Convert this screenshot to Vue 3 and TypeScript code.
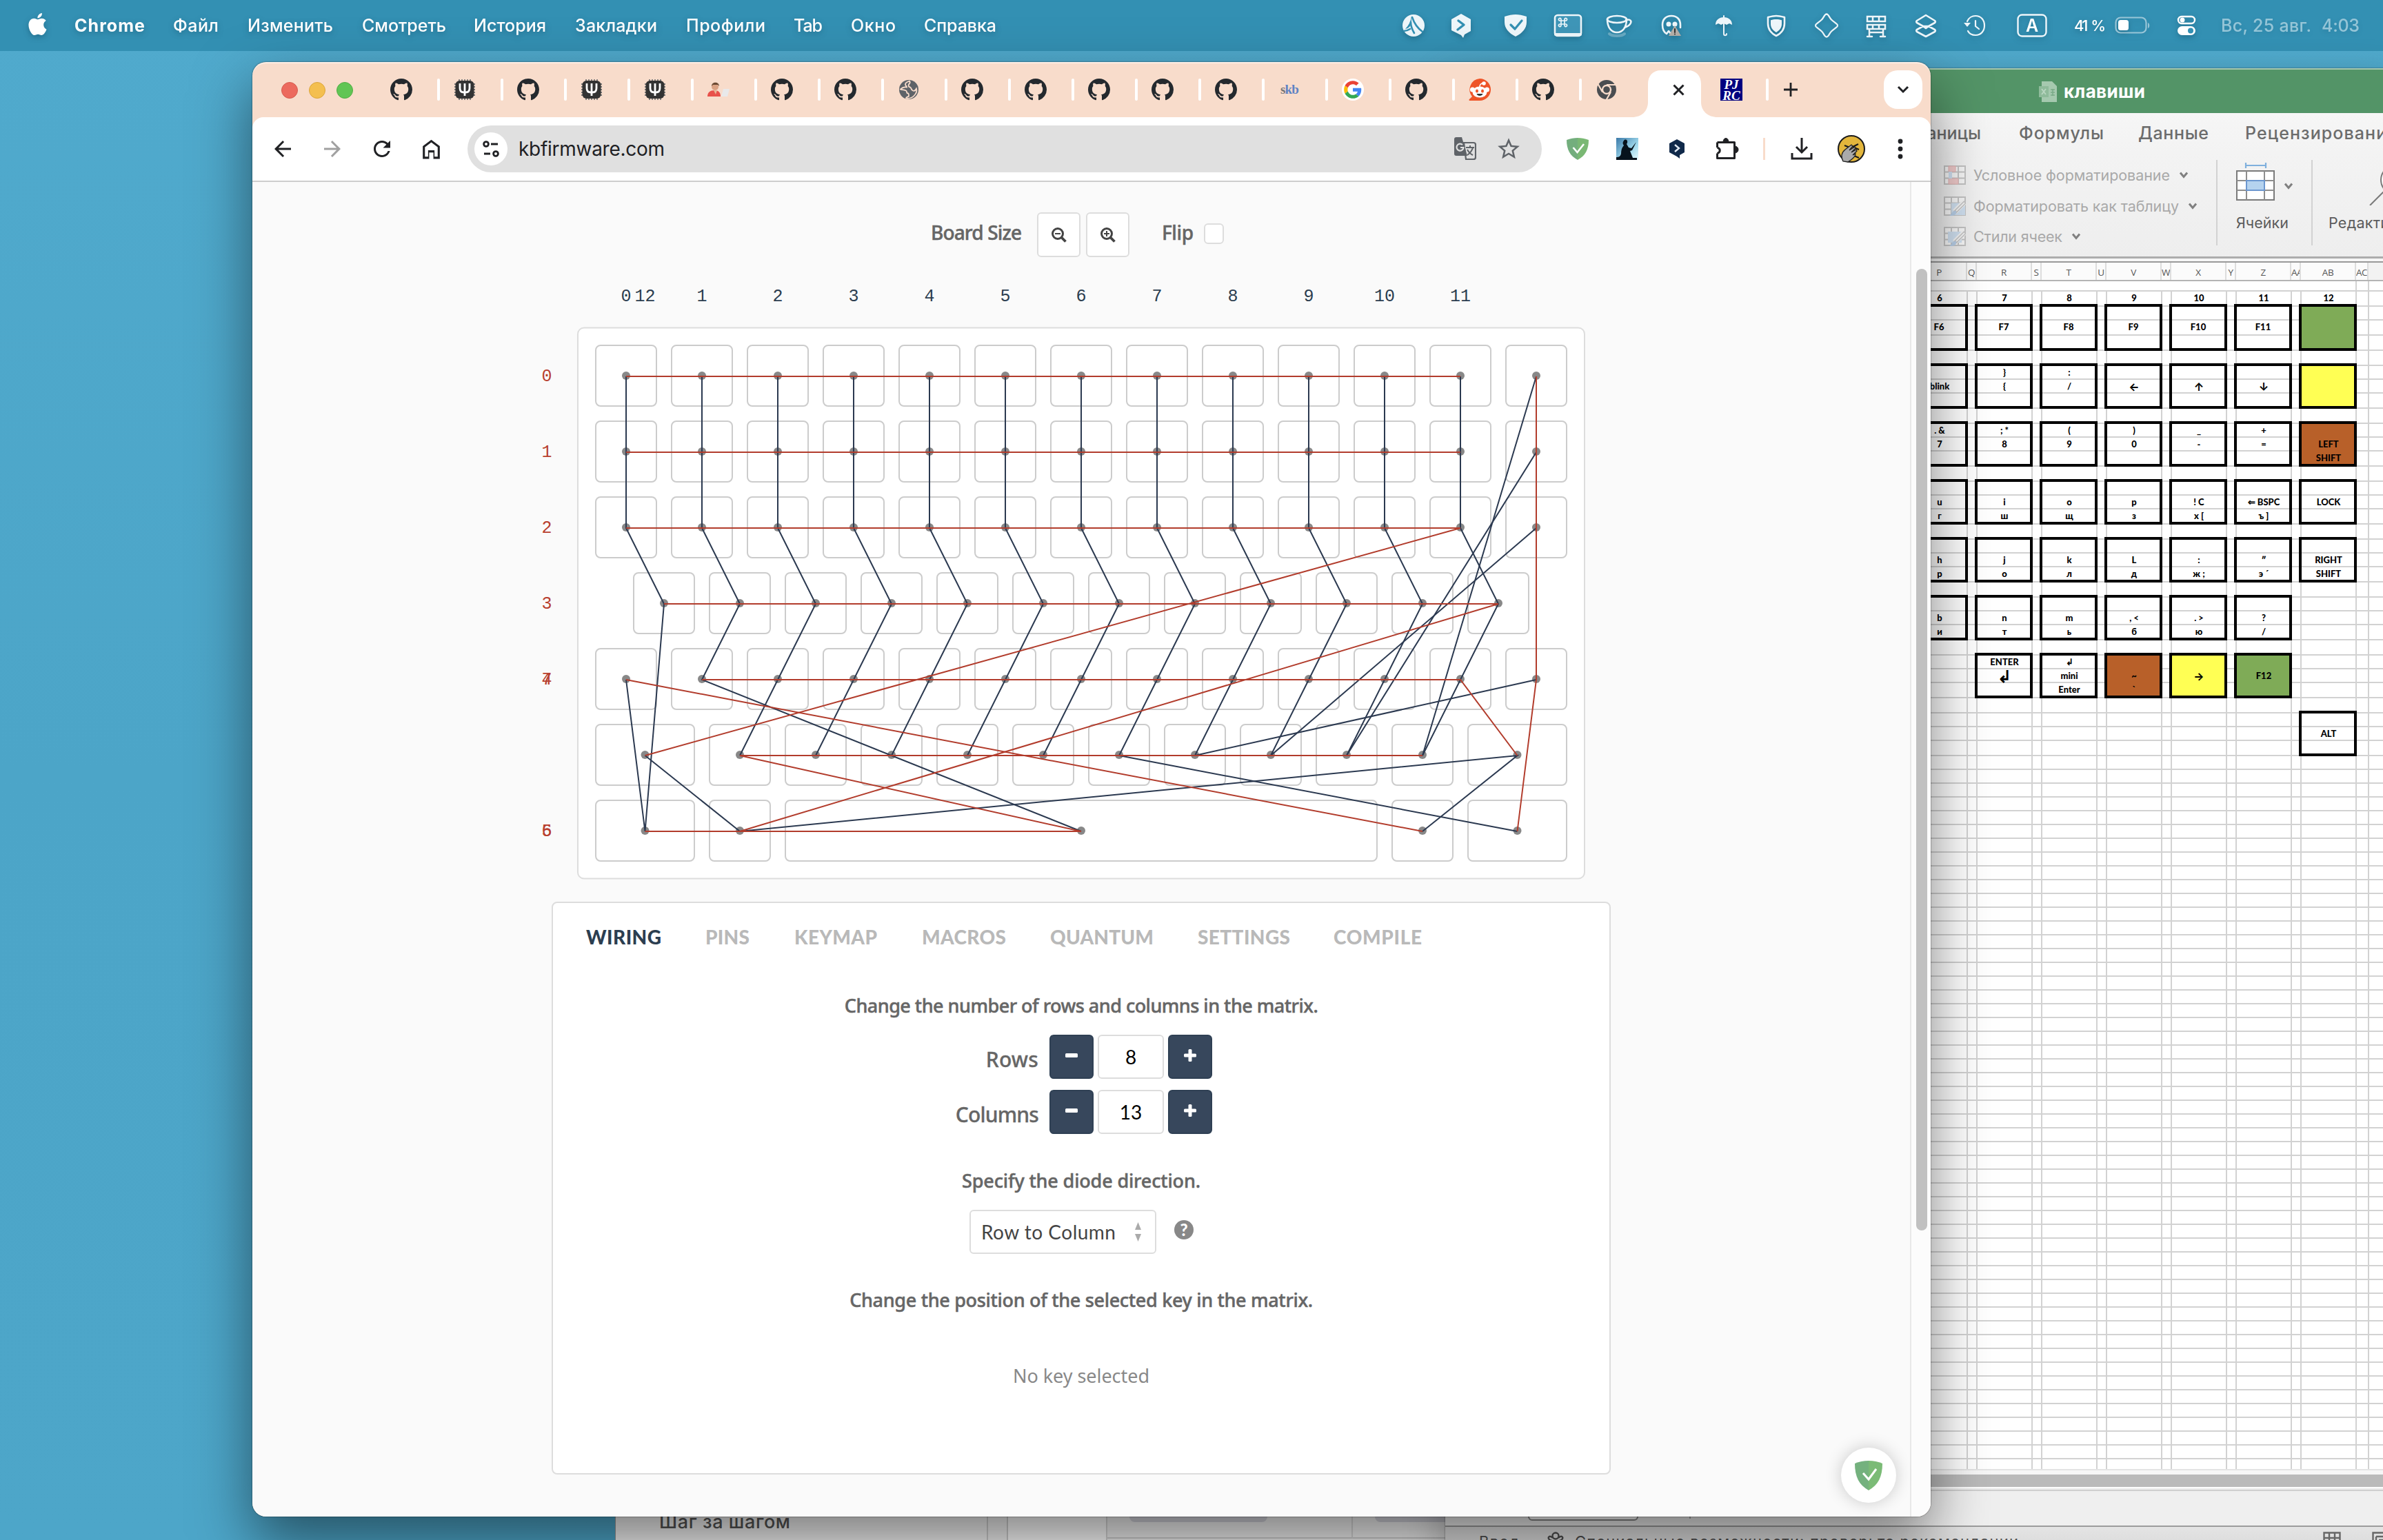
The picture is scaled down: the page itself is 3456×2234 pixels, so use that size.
<script setup lang="ts">
import type { Directive } from 'vue'

/** Tracks a label so that it takes exactly the given width in pixels. */
const vFit: Directive<HTMLElement, number> = {
  mounted(el, binding) {
    const text = el.textContent ?? ''
    const range = document.createRange()
    range.selectNodeContents(el)
    const natural = range.getBoundingClientRect().width
    const steps = Math.max(1, text.trim().length - 1)
    el.style.letterSpacing = `${((binding.value - natural) / steps).toFixed(3)}px`
  },
}

interface Label { text: string; width: number; gap: number }

const menus: Label[] = [
  { text: 'Файл', width: 66, gap: 41 },
  { text: 'Изменить', width: 124, gap: 42 },
  { text: 'Смотреть', width: 122, gap: 42 },
  { text: 'История', width: 105, gap: 40 },
  { text: 'Закладки', width: 119, gap: 42 },
  { text: 'Профили', width: 115, gap: 42 },
  { text: 'Tab', width: 42, gap: 41 },
  { text: 'Окно', width: 65, gap: 41 },
  { text: 'Справка', width: 105, gap: 41 },
]

const statusIcons: { name: string; gap: number }[] = [
  { name: 'nord', gap: 0 }, { name: 'hex', gap: 25 }, { name: 'shield', gap: 35 },
  { name: 'cmd', gap: 32 }, { name: 'cup', gap: 30 }, { name: 'ghost', gap: 33 },
  { name: 'umbrella', gap: 31 }, { name: 'guard', gap: 32 }, { name: 'star', gap: 29 },
  { name: 'server', gap: 28 }, { name: 'stack', gap: 28 }, { name: 'clock', gap: 27 },
  { name: 'letter', gap: 39 },
]

const tabs: string[] = [
  'github', 'ub', 'github', 'ub', 'ub', 'man', 'github', 'github', 'globe', 'github',
  'github', 'github', 'github', 'github', 'skb', 'google', 'github', 'reddit', 'github', 'chrome',
]

/* Board geometry */
const U = 110
const X0 = 863
const Y0 = 500
interface Key { x: number; y: number; w: number }
const keys: Key[] = []
for (const y of [0, 1, 2, 4]) for (let i = 0; i < 13; i++) keys.push({ x: i, y, w: 1 })
for (let i = 0; i < 12; i++) keys.push({ x: i + 0.5, y: 3, w: 1 })
keys.push({ x: 0, y: 5, w: 1.5 })
for (let i = 0; i < 10; i++) keys.push({ x: i + 1.5, y: 5, w: 1 })
keys.push({ x: 11.5, y: 5, w: 1.5 }, { x: 0, y: 6, w: 1.5 }, { x: 1.5, y: 6, w: 1 },
  { x: 2.5, y: 6, w: 8 }, { x: 10.5, y: 6, w: 1 }, { x: 11.5, y: 6, w: 1.5 })

const shapes = keys.map(k => {
  const w = k.w * U - 20
  return { x: X0 + k.x * U, y: Y0 + k.y * U, w, cx: X0 + k.x * U + w / 2, cy: Y0 + k.y * U + 45 }
})

const colWires: string[] = [
  '908,546 908,766 963,876 935.5,1206 908,986',
  '935.5,1096 1073,1206 2200.5,1096 2063,1206',
  '1018,546 1018,766 1073,876 1018,986 1568,1206',
]
for (let c = 2; c < 12; c++) {
  const x = 908 + c * U
  colWires.push(`${x},546 ${x},766 ${x + 55},876 ${x},986 ${x - 55},1096`)
}
colWires.push('2063,1096 2228,546', '1953,1096 2228,656', '1843,1096 2228,766',
  '1733,1096 2228,986', '1623,1096 2200.5,1206')

const rowWires: string[] = [
  '908,546 2118,546', '908,656 2118,656', '908,766 2118,766 935.5,1096',
  '963,876 2173,876 1073,1206', '1018,986 2118,986 2200.5,1096',
  '2063,1096 1073,1096 1568,1206', '935.5,1206 1568,1206', '908,986 2063,1206',
  '2228,546 2228,986 2200.5,1206',
]
const colLabels = [...Array(12).keys()].map(n => ({ n, x: 908 + n * U })).concat({ n: 12, x: 935.5 })
const rowLabels = [0, 1, 2, 3, 4, 6, 6, 4].map((r, n) => ({ n, y: 553 + r * U }))

const panelTabs: Label[] = [
  { text: 'WIRING', width: 109, gap: 0 }, { text: 'PINS', width: 64, gap: 64 },
  { text: 'KEYMAP', width: 120, gap: 65 }, { text: 'MACROS', width: 122, gap: 65 },
  { text: 'QUANTUM', width: 150, gap: 64 }, { text: 'SETTINGS', width: 134, gap: 64 },
  { text: 'COMPILE', width: 128, gap: 63 },
]
const counters = [
  { label: 'Rows', width: 76, value: '8' },
  { label: 'Columns', width: 121, value: '13' },
]

/* Spreadsheet */
const headers: { t: string; w: number }[] = []
for (const pair of ['P Q', 'R S', 'T U', 'V W', 'X Y', 'Z AA']) {
  const [a, b] = pair.split(' ')
  headers.push({ t: a, w: 80 }, { t: b, w: 14 })
}
headers.push({ t: 'AB', w: 80 }, { t: 'AC', w: 18 })

const numbers = [6, 7, 8, 9, 10, 11, 12]
const hLines: number[] = [421, 443, 463, 485, 507, 529]
for (let b = 529; b < 1095;) for (const s of b === 1033 ? [20, 20, 22] : [20, 20, 22, 22]) hLines.push((b += s))
for (let y = 1115; y < 2130; y += 20) hLines.push(y)
const vLines: { x: number; y: number }[] = []
for (let i = 0; i < 7; i++) vLines.push({ x: 2773 + i * 94, y: 421 })
for (let i = 0; i < 6; i++) vLines.push({ x: 2853 + i * 94, y: 421 })
vLines.push({ x: 3417, y: 407 }, { x: 3435, y: 407 })

interface Cap { l: string[]; c?: string; none?: boolean; big?: boolean }
const k = (...l: string[]): Cap => ({ l })
const none: Cap = { l: [], none: true }
const isArrow = (t: string): boolean => /^[←↑↓→]$/.test(t)
const caps: Cap[][] = [
  [k('', 'F6'), k('', 'F7'), k('', 'F8'), k('', 'F9'), k('', 'F10'), k('', 'F11'), { l: [], c: 'green' }],
  [k('', 'blink'), k('}', '{'), k(':', '/'), k('', '←'), k('', '↑'), k('', '↓'), { l: [], c: 'yellow' }],
  [k('. &', '7'), k('; *', '8'), k('(', '9'), k(')', '0'), k('_', '-'), k('+', '='), { l: ['', 'LEFT', 'SHIFT'], c: 'brown' }],
  [k('', 'u', 'г'), k('', 'i', 'ш'), k('', 'o', 'щ'), k('', 'p', 'з'), k('', '! C', 'х ['), k('', '⇐ BSPC', 'ъ ]'), k('', 'LOCK')],
  [k('', 'h', 'р'), k('', 'j', 'о'), k('', 'k', 'л'), k('', 'L', 'д'), k('', ':', 'ж ;'), k('', '″', 'э ´'), k('', 'RIGHT', 'SHIFT')],
  [k('', 'b', 'и'), k('', 'n', 'т'), k('', 'm', 'ь'), k('', ', <', 'б'), k('', '. >', 'ю'), k('', '?', '/'), none],
  [none, { l: ['ENTER', '↲'], big: true }, k('↲', 'mini', 'Enter'), { l: ['', '~', '`'], c: 'brown' }, { l: ['', '→'], c: 'yellow' }, { l: ['', 'F12'], c: 'green' }, none],
  [none, none, none, none, none, none, k('', 'ALT')],
]

const formats = [
  { text: 'Условное форматирование', width: 285, kind: 0 },
  { text: 'Форматировать как таблицу', width: 298, kind: 1 },
  { text: 'Стили ячеек', width: 129, kind: 2 },
]
</script>

<template>
  <div class="desktop">
    <!-- Menu bar -->
    <header class="menubar">
      <svg class="apple" viewBox="2.2 0 19.6 24" width="27" height="32"><path fill="#fff" d="M12.152 6.896c-.948 0-2.415-1.078-3.96-1.04-2.04.027-3.91 1.183-4.961 3.014-2.117 3.675-.546 9.103 1.519 12.09 1.013 1.454 2.208 3.09 3.792 3.039 1.52-.065 2.09-.987 3.935-.987 1.831 0 2.35.987 3.96.948 1.637-.026 2.676-1.48 3.676-2.948 1.156-1.688 1.636-3.325 1.662-3.415-.039-.013-3.182-1.221-3.22-4.857-.026-3.04 2.48-4.494 2.597-4.559-1.429-2.09-3.623-2.324-4.39-2.376-2-.156-3.675 1.09-4.61 1.09zM15.53 3.83c.843-1.012 1.4-2.427 1.245-3.83-1.207.052-2.662.805-3.532 1.818-.78.896-1.454 2.338-1.273 3.714 1.338.104 2.715-.688 3.559-1.701" /></svg>
      <b v-fit="102" class="mi app">Chrome</b>
      <span v-for="m in menus" :key="m.text" class="mi" :style="{ width: m.width + 'px', marginLeft: m.gap + 'px' }"><span v-fit="m.width">{{ m.text }}</span></span>
      <div class="status">
        <svg v-for="s in statusIcons" :key="s.name" width="44" height="44" viewBox="0 0 44 44" fill="none" stroke="#eef6fa" stroke-width="2.6" stroke-linejoin="round" stroke-linecap="round" :style="{ marginLeft: s.gap + 'px' }">
          <g v-if="s.name === 'nord'"><circle cx="22" cy="22" r="16" fill="#eef6fa" stroke="none" /><path d="M20 10c3 9 8 16 15 21M18 17c0 6 2 11 5 16M17 27c-3 2-6 3-9 3" stroke="#3390b3" stroke-width="2.600" /><path d="M19 9c-1 7-4 13-9 18 5-1 8-4 9-9z" fill="#3390b3" stroke="none" /></g>
          <g v-else-if="s.name === 'hex'"><path d="M22 5l14 8v17l-9 5-2 5-3-4-14-7V13z" fill="#eef6fa" stroke="none" /><path d="M18 15l8 6-9 7" stroke="#3390b3" stroke-width="3.4" /></g>
          <g v-else-if="s.name === 'shield'"><path d="M22 6c5 0 10 1 16 3v8c0 9-6 16-16 21C12 33 6 26 6 17V9c6-2 11-3 16-3z" fill="#eef6fa" stroke="none" /><path d="M15 21l6 6 10-12" stroke="#3390b3" stroke-width="3.2" /></g>
          <g v-else-if="s.name === 'cmd'"><rect x="3" y="7" width="38" height="30" rx="4" fill="#3f96b8" /><path d="M4 35h36" stroke-width="4" /><path d="M12 15h5v5h-5zM12 15v-1.5a1.8 1.8 0 1 0-1.8 1.5zM17 15v-1.5a1.8 1.8 0 1 1 1.800 1.500zM12 20v1.500a1.800 1.800 0 1 1-1.800-1.500zM17 20v1.500a1.800 1.800 0 1 0 1.800-1.500z" stroke-width="1.700" /></g>
          <g v-else-if="s.name === 'cup'"><ellipse cx="19" cy="13" rx="14" ry="5" /><path d="M5 13c0 12 6 19 14 19s14-7 14-19M32 14c7-2 9 2 6 6-2 3-5 4-8 5" /><path d="M8 34c4 4 18 4 22 0" stroke-opacity=".3" stroke-width="4" /></g>
          <g v-else-if="s.name === 'ghost'"><path d="M14 34c-5-3-6-8-6-13 0-8 5-13 13-13s13 5 13 13v4M14 34l3-4 4 5" /><circle cx="17" cy="20" r="3.500" fill="#eef6fa" stroke="none" /><circle cx="26" cy="20" r="3.500" fill="#eef6fa" stroke="none" /><path d="M26 22l9 15H17z" fill="#b5afa8" stroke="none" /><path d="M26 27v5M26 34.500v.1" stroke="#333" stroke-width="2" /></g>
          <g v-else-if="s.name === 'umbrella'"><path d="M10 21c0-7 5-11 12-11s12 4 12 11l-4-2-4 2-4-2-4 2-4-2z" fill="#eef6fa" stroke="none" /><path d="M22 8v26c0 3 4 3 4 0" stroke-width="2" /></g>
          <g v-else-if="s.name === 'guard'"><path d="M22 8c4 0 8 1 12 2v9c0 8-4 14-12 18C14 33 10 27 10 19v-9c4-1 8-2 12-2z" /><path d="M22 13c3 0 5 .5 8 1.200V20c0 5-3 9-8 12-5-3-8-7-8-12v-5.800c3-.7 5-1.200 8-1.200z" fill="#eef6fa" stroke="none" /></g>
          <path v-else-if="s.name === 'star'" d="M20 6.500c1.200-1.200 2.800-1.200 4 0 2 2 2.500 4.500 5 7s5 4 8 6.500c1.300 1.200 1.300 2.800 0 4-3 2.500-5.500 4-8 6.500s-3 5-5 7c-1.200 1.200-2.800 1.200-4 0-2-2-2.500-4.500-5-7s-5-4-8-6.500c-1.300-1.200-1.300-2.800 0-4 3-2.500 5.500-4 8-6.500s3-5 5-7z" stroke-width="2.200" />
          <g v-else-if="s.name === 'server'"><path d="M9 9h26v7H9zM9 21h26v6H9zM17 9v7M26 9v7M17 21v6M26 21v6M12 27v10M32 27v10M12 32h20M9 38h7M28 38h7" stroke-width="2.500" stroke-linejoin="miter" /></g>
          <g v-else-if="s.name === 'stack'"><path d="M22 7l13 8c1 1 1 2 0 3l-9 5h-8l-9-5c-1-1-1-2 0-3zM18 23l-9 5c-1 1-1 2 0 3l13 7 13-7c1-1 1-2 0-3l-9-5-4 3z" /></g>
          <g v-else-if="s.name === 'clock'"><path d="M11 16c2-5 7-8 12-8 8 0 13 6 13 14s-5 14-13 14c-5 0-9-2-11-6M23 15v8l5 4" stroke-width="2.200" /><path d="M6 18h10l-5 6z" fill="#eef6fa" stroke="none" /></g>
          <g v-else><rect x="1.500" y="6.500" width="41" height="31" rx="6" stroke-width="2.400" /><text x="22" y="31" text-anchor="middle" class="kbd">A</text></g>
        </svg>
        <span class="mi pct"><span v-fit="46">41 %</span></span>
        <svg class="batt" width="52" height="26" viewBox="0 0 52 26"><rect x="1.500" y="1.500" width="44" height="22" rx="7" fill="none" stroke="#fff" stroke-opacity=".5" stroke-width="2.200" /><rect x="5" y="5" width="15" height="15" rx="3.500" fill="#fff" /><path d="M48 9c3 1 3 7 0 8z" fill="#fff" fill-opacity=".5" /></svg>
        <svg class="cc" width="28" height="30" viewBox="0 0 28 30"><rect x="2" y="2" width="24" height="10" rx="5" fill="none" stroke="#fff" stroke-width="2.400" /><circle cx="8" cy="7" r="3.500" fill="#fff" /><rect x="1" y="16" width="26" height="13" rx="6.500" fill="#fff" /><circle cx="20" cy="22.500" r="4" fill="#3390b3" /></svg>
        <span class="mi date"><span v-fit="131">Вс, 25 авг.</span></span>
        <span class="mi time"><span v-fit="55">4:03</span></span>
      </div>
    </header>

    <!-- Document behind the browser -->
    <section class="doc">
      <div class="doc-side"><span v-fit="190">Шаг за шагом</span></div>
      <div class="doc-gutter"></div>
      <div class="doc-margin"></div>
      <div class="doc-col"><i></i></div>
      <div class="doc-col last"><i></i></div>
    </section>

    <!-- Spreadsheet window -->
    <section class="excel">
      <div class="x-title">
        <svg width="27" height="30" viewBox="0 0 27 30"><path d="M4 0h15l7 7v23H4z" fill="#a5c9af" /><path d="M0 7h14v16H0z" fill="#8fbb9b" /><path d="M4 11l6 8M10 11l-6 8" stroke="#b9d6c1" stroke-width="1.800" /><path d="M17 12h6M17 16h6M17 20h6M20 11v10" stroke="#7aab88" stroke-width="1.500" /></svg>
        <b v-fit="118">клавиши</b>
      </div>
      <div class="x-tabs">
        <span class="t0">Разметка страницы</span>
        <span class="t1"><span v-fit="123">Формулы</span></span>
        <span class="t2"><span v-fit="102">Данные</span></span>
        <span class="t3"><span v-fit="221">Рецензирование</span></span>
      </div>
      <div class="x-ribbon">
        <div class="x-formats">
          <div v-for="f in formats" :key="f.text" class="x-fmt">
            <svg width="32" height="28" viewBox="0 0 32 28">
              <path d="M1 1h30v26H1zM1 9.500h30M1 18.500h30M11 1v26M21 1v26" fill="#f7f7f7" stroke="#c4c4c4" stroke-width="2" />
              <g v-if="f.kind === 0"><path d="M7 1h10v8H7zM7 19h14v8H7z" fill="#efcaca" stroke="#e5b5b5" /><path d="M7 9h5v10H7z" fill="#cfdff0" /></g>
              <g v-else><path :d="f.kind === 1 ? 'M11 9.500h20V27H11z' : 'M6 7h20v16H6z'" fill="#d0e0f0" /><path d="M31 7L16 22" stroke="#f3f3f3" stroke-width="8" /><path d="M30 9L17 22" stroke="#c4c4c4" stroke-width="5" stroke-linecap="round" /><path d="M30 9L18 21" stroke="#f5f5f5" stroke-width="2" /><path d="M18 21c1 5-3 8-10 7 4-2 2-7 10-7z" fill="#b8cfe8" /></g>
            </svg>
            <span class="x-ftext" :style="{ width: f.width + 'px' }"><span v-fit="f.width">{{ f.text }}</span></span>
            <svg width="14" height="10" viewBox="0 0 14 10" fill="none" stroke="#808080" stroke-width="3"><path d="M2 1.500l5 6 5-6" /></svg>
          </div>
        </div>
        <div class="x-cells">
          <div class="x-cellrow">
            <svg width="56" height="58" viewBox="0 0 56 58" fill="none"><path d="M14 7h29M14 3v8M43 3v8" stroke="#7fb0dd" stroke-width="2.200" /><path d="M1 15h54v42H1z" fill="#fff" stroke="#7a7a7a" stroke-width="2" /><path d="M15 15v42M41 15v42M1 29h54M1 43h54" stroke="#8e8e8e" stroke-width="2" /><path d="M15 29h26v14H15z" fill="#b5d3ef" stroke="#6c97cf" stroke-width="2" /></svg>
            <svg class="cv" width="14" height="10" viewBox="0 0 14 10" fill="none" stroke="#808080" stroke-width="3"><path d="M2 1.500l5 6 5-6" /></svg>
          </div>
          <span v-fit="76">Ячейки</span>
        </div>
        <div class="x-edit">
          <svg width="80" height="64" viewBox="0 0 80 64"><circle cx="59" cy="27" r="21" fill="#fff" stroke="#7a7a7a" stroke-width="2" /><path d="M44 42L22 64" stroke="#7a7a7a" stroke-width="2" /></svg>
          <span v-fit="178">Редактирование</span>
        </div>
      </div>
      <div class="x-rule"></div>
      <div class="x-head"><span v-for="h in headers" :key="h.t" :style="{ width: h.w + 'px' }"><i>{{ h.t }}</i></span><em></em></div>
      <div class="sheet">
        <svg class="lines" width="683" height="1723" viewBox="2773 407 683 1723" fill="none" stroke="#d2d2d2" stroke-width="2" shape-rendering="crispEdges">
          <path v-for="y in hLines" :key="'h' + y" :d="`M2773 ${y}H3456`" />
          <path v-for="v in vLines" :key="'v' + v.x" :d="`M${v.x} ${v.y}V2130`" />
        </svg>
        <div class="nums"><b v-for="n in numbers" :key="n">{{ n }}</b></div>
        <div v-for="(row, r) in caps" :key="r" class="caps" :class="{ first: r === 0 }">
          <div v-for="(c, i) in row" :key="i" class="cap" :class="[c.c, { none: c.none, big: c.big }]">
            <b v-for="(t, j) in c.l" :key="j" :class="{ arrow: isArrow(t) }">{{ t }}</b>
          </div>
        </div>
      </div>
      <div class="x-scroll"></div>
      <div class="x-sheets"><i></i><em></em></div>
      <div class="x-status">
        <span class="s1"><span v-fit="58">Ввод</span></span>
        <svg width="26" height="30" viewBox="0 0 26 30" fill="none" stroke="#505050" stroke-width="2.400"><circle cx="13" cy="6" r="4.500" /><path d="M9 9C4 4 0 9 5 12l5 2v12M17 9c5-5 9 0 4 3l-5 2v12" /></svg>
        <span class="s2"><span v-fit="643">Специальные возможности: проверьте рекомендации</span></span>
        <svg class="g1" width="26" height="26" viewBox="0 0 26 26" fill="none" stroke="#666" stroke-width="2.400"><path d="M1.500 1.500h23v22h-23zM9 1.500v22M17 1.500v22M1.500 9h23M1.500 17h23" /></svg>
        <svg class="g2" width="26" height="26" viewBox="0 0 26 26" fill="none" stroke="#666" stroke-width="2.400"><path d="M1.500 1.500h23v22h-23zM6 7h18M6 7v17M10 12h14M10 16h14" /></svg>
      </div>
    </section>

    <!-- Browser -->
    <section class="chrome">
      <div class="strip">
        <div class="lights"><i class="r"></i><i class="y"></i><i class="g"></i></div>
        <div v-for="(t, i) in tabs" :key="i" class="tab">
          <svg v-if="t === 'github'" width="32" height="32" viewBox="0 0 16 16"><path fill="#24292e" fill-rule="evenodd" d="M8 0C3.580 0 0 3.580 0 8c0 3.540 2.290 6.530 5.470 7.590.4.070.55-.17.55-.38 0-.19-.01-.82-.01-1.490-2.010.37-2.530-.49-2.690-.94-.09-.23-.48-.94-.82-1.130-.28-.15-.68-.52-.01-.53.63-.01 1.080.58 1.230.82.72 1.210 1.870.87 2.330.66.070-.52.28-.87.51-1.070-1.780-.2-3.640-.89-3.640-3.950 0-.87.31-1.590.82-2.150-.08-.2-.36-1.020.08-2.120 0 0 .67-.21 2.200.82.64-.18 1.320-.27 2-.27.68 0 1.360.09 2 .27 1.530-1.040 2.200-.82 2.200-.82.44 1.100.16 1.920.08 2.120.51.56.82 1.270.82 2.150 0 3.070-1.870 3.750-3.650 3.950.29.25.54.73.54 1.480 0 1.070-.01 1.930-.01 2.200 0 .21.15.46.55.38A8.013 8.013 0 0 0 16 8c0-4.420-3.580-8-8-8z" /></svg>
          <svg v-else-if="t === 'ub'" width="32" height="32" viewBox="0 0 32 32"><path d="M8 1v30M12 1v30M16 1v30M20 1v30M24 1v30" stroke="#777" stroke-width="1.800" /><path d="M1 8h30M1 12h30M1 16h30M1 20h30M1 24h30" stroke="#777" stroke-width="1.800" /><rect x="2.500" y="3" width="27" height="26" rx="6" fill="#333" /><path d="M9 7v7c0 4 2 6 6 6h2c4 0 6-2 6-6V7M16 7v18" fill="none" stroke="#fff" stroke-width="2.800" /></svg>
          <svg v-else-if="t === 'man'" width="32" height="32" viewBox="0 0 32 32"><circle cx="11" cy="12" r="5" fill="#dba283" /><path d="M6 11c0-7 11-7 11 0l-2-2H8z" fill="#6b4a33" /><path d="M0 26c0-6 4-9 10-9s9 3 9 9z" fill="#e8504a" /><path d="M9 17h5l-2 6z" fill="#e8b598" /><path d="M23 15h9l-3 11h-9z" fill="#e9e9ea" /></svg>
          <svg v-else-if="t === 'globe'" width="32" height="32" viewBox="0 0 32 32"><circle cx="16" cy="16" r="14" fill="#5f6368" /><path d="M17 3.500c-3 1-6 2-6 5 0 2 2 2 2 4-3 0-5-1-9 3 1 1 5 0 8 2 2 1 0 4 3 4 1 0 1 2 1 4-1 1-4 1-4 3 10 2 17-8 15-14-1 2-3 4-5 3-3-1-2-4-4-5-2 0-3-2-2-4 1-2 3-2 1-5z" fill="none" stroke="#f8dccb" stroke-width="1.800" /></svg>
          <span v-else-if="t === 'skb'" class="skb"><i>s</i>kb</span>
          <svg v-else-if="t === 'google'" width="32" height="32" viewBox="-6 -6 60 60"><circle cx="24" cy="24" r="30" fill="#fff" /><path fill="#EA4335" d="M24 9.500c3.540 0 6.710 1.220 9.210 3.600l6.850-6.850C35.900 2.380 30.470 0 24 0 14.620 0 6.510 5.380 2.560 13.220l7.980 6.190C12.430 13.720 17.740 9.500 24 9.500z" /><path fill="#4285F4" d="M46.980 24.550c0-1.570-.15-3.090-.38-4.550H24v9.020h12.940c-.58 2.960-2.260 5.480-4.780 7.180l7.730 6c4.510-4.180 7.090-10.360 7.090-17.650z" /><path fill="#FBBC05" d="M10.530 28.590c-.48-1.450-.76-2.990-.76-4.590s.27-3.140.76-4.590l-7.980-6.190C.92 16.460 0 20.120 0 24c0 3.880.92 7.540 2.560 10.780l7.970-6.190z" /><path fill="#34A853" d="M24 48c6.480 0 11.930-2.130 15.890-5.810l-7.730-6c-2.150 1.450-4.920 2.300-8.160 2.300-6.260 0-11.570-4.220-13.470-9.910l-7.980 6.190C6.510 42.620 14.620 48 24 48z" /></svg>
          <svg v-else-if="t === 'reddit'" width="32" height="32" viewBox="0 0 32 32"><path d="M16 0a16 16 0 1 1 0 32H2c-2 0-2-2 0-3l3-3A16 16 0 0 1 16 0z" fill="#ee5428" /><circle cx="5.500" cy="16" r="3.500" fill="#fff" /><circle cx="26.500" cy="16" r="3.500" fill="#fff" /><circle cx="22" cy="7" r="2.800" fill="#fff" /><path d="M16 12c0-4 2-5 5-5" fill="none" stroke="#fff" stroke-width="1.600" /><ellipse cx="16" cy="19.500" rx="10.500" ry="8" fill="#fff" /><ellipse cx="12" cy="18" rx="2" ry="2.500" fill="#ee5428" /><ellipse cx="20" cy="18" rx="2" ry="2.500" fill="#ee5428" /><path d="M11.500 22h9c-1 4-8 4-9 0z" fill="#333" /></svg>
          <svg v-else width="32" height="32" viewBox="0 0 32 32"><circle cx="16" cy="16" r="14" fill="#4a4d51" /><circle cx="16" cy="16" r="6" fill="#4a4d51" stroke="#f8dccb" stroke-width="2.400" /><path d="M16 9h13M22 19.500L15.500 31M10 19.500L3.500 8" stroke="#f8dccb" stroke-width="2.200" /></svg>
          <i v-if="i < 19" class="sep"></i>
        </div>
        <svg class="active" width="124" height="68" viewBox="0 0 124 68"><path d="M0 68c14 0 23-9 23-22V20C23 8 30 0 42 0h39c12 0 19 8 19 20v26c0 13 10 22 24 22z" fill="#fff" /><path d="M60.500 21.500l14 14M74.500 21.500l-14 14" stroke="#202124" stroke-width="3" /></svg>
        <svg class="pjrc" width="32" height="32" viewBox="0 0 32 32"><path fill="#000080" d="M0 0h32v32H0z" /><text x="16" y="15" text-anchor="middle">PJ</text><text x="16" y="31" text-anchor="middle">RC</text></svg>
        <i class="sep s2"></i>
        <svg class="plus" width="20" height="20" viewBox="0 0 20 20"><path d="M10 0v20M0 10h20" stroke="#202124" stroke-width="2.800" /></svg>
        <div class="drop"><svg width="18" height="12" viewBox="0 0 18 12"><path d="M2 2l7 7 7-7" fill="none" stroke="#202124" stroke-width="3" /></svg></div>
      </div>

      <div class="bar">
        <svg class="n1" width="36" height="36" viewBox="0 0 24 24" fill="#202124"><path d="M20 11H7.830l5.590-5.590L12 4l-8 8 8 8 1.410-1.410L7.830 13H20v-2z" /></svg>
        <svg class="n2" width="36" height="36" viewBox="0 0 24 24" fill="#a0a0a0"><path d="M12 4l-1.410 1.410L16.170 11H4v2h12.170l-5.580 5.590L12 20l8-8z" /></svg>
        <svg class="n3" width="36" height="36" viewBox="0 0 24 24" fill="#202124"><path d="M17.650 6.350C16.200 4.900 14.210 4 12 4c-4.420 0-7.990 3.580-7.990 8s3.570 8 7.990 8c3.730 0 6.840-2.550 7.730-6h-2.080c-.82 2.330-3.040 4-5.650 4-3.310 0-6-2.690-6-6s2.690-6 6-6c1.660 0 3.140.69 4.220 1.780L13 11h7V4l-2.350 2.350z" /></svg>
        <svg class="n4" width="37" height="37" viewBox="0 0 24 24" fill="#202124"><path d="M6 19h3v-6h6v6h3v-9l-6-4.500L6 10v9Zm-2 2V9l8-6 8 6v12h-6v-6h-4v6H4Z" /></svg>
        <div class="omni">
          <div class="site"><svg width="26" height="26" viewBox="0 0 26 26" fill="none" stroke="#202124" stroke-width="2.800"><circle cx="6" cy="6" r="3.400" /><path d="M13 6h10M3 20h9" /><circle cx="20" cy="20" r="3.400" /></svg></div>
          <span class="url"><span v-fit="212">kbfirmware.com</span></span>
          <svg class="tr" width="32" height="34" viewBox="0 0 32 34"><path d="M14 8h14a3 3 0 0 1 3 3v18a3 3 0 0 1-3 3H17z" fill="none" stroke="#5f6368" stroke-width="2.200" /><path d="M3 0h8l8 27H3a3 3 0 0 1-3-3V3a3 3 0 0 1 3-3z" fill="#5f6368" /><path d="M12 11a5 5 0 1 0 1.500 4H9" fill="none" stroke="#e0e0e0" stroke-width="2.200" /><path d="M17 15h12M23 12v3M27 15c-1 5-4 8-8 11M19 18c2 4 4 6 8 8" fill="none" stroke="#5f6368" stroke-width="2" /></svg>
          <svg class="st" width="38" height="38" viewBox="0 0 24 24" fill="#5f6368"><path d="M22 9.240l-7.190-.62L12 2 9.190 8.630 2 9.240l5.460 4.730L5.820 21 12 17.270 18.180 21l-1.630-7.030L22 9.240zM12 15.400l-3.760 2.270 1-4.280-3.320-2.880 4.380-.38L12 6.100l1.710 4.040 4.380.38-3.320 2.880 1 4.280L12 15.400z" /></svg>
        </div>
        <svg class="e1" width="32" height="32" viewBox="0 0 32 32"><path d="M16 0c5 0 11 1 16 3 0 14-5 23-16 29z" fill="#7ab874" /><path d="M16 0C11 0 5 1 0 3c0 14 5 23 16 29z" fill="#73ae7d" /><path d="M9.500 14l6 7L25 9" fill="none" stroke="#fff" stroke-width="2.600" /></svg>
        <svg class="e2" width="32" height="32" viewBox="0 0 32 32"><defs><linearGradient id="sky" x1="0" y1="0" x2="1" y2="1"><stop offset="0" stop-color="#3a79a8" /><stop offset=".6" stop-color="#9fd8ec" /><stop offset="1" stop-color="#e8fbff" /></linearGradient></defs><path fill="url(#sky)" d="M0 0h32v32H0z" /><path d="M11 4c2-3 6-1 5 3l-1 2 3 5 4 1 7-9-6 12-3 1 4 10h6v3H0v-4c4 0 6-1 7-5 0-5 1-9 4-12-2-2-2-5 0-7z" fill="#06121c" /></svg>
        <svg class="e3" width="24" height="28" viewBox="0 0 24 28"><path d="M12 0l11 6v13l-7 4v5l-4-3-11-6V6z" fill="#10294a" /><path d="M9 8l6 5-6 5" fill="none" stroke="#dfe8f2" stroke-width="2.400" /></svg>
        <svg class="e4" width="34" height="32" viewBox="0 0 34 32"><path d="M2.500 6.500h25v6.500M27.500 21v8.500h-25v-7M2.500 14V6.500M2.500 14c5 1.500 5 7 0 8.500" fill="none" stroke="#202124" stroke-width="3" stroke-linejoin="round" /><path d="M11 6a4 5.500 0 0 1 8 0zM28 12a5 5 0 0 1 0 10z" fill="#202124" stroke="#202124" /><path d="M27.500 12v10" stroke="#202124" stroke-width="3" /></svg>
        <i class="esep"></i>
        <svg class="e5" width="32" height="32" viewBox="0 0 32 32" fill="none" stroke="#202124" stroke-width="3"><path d="M16 0v20M8 13l8 8 8-8M2 22v8h28v-8" /></svg>
        <svg class="e6" width="40" height="40" viewBox="0 0 40 40"><circle cx="20" cy="20" r="19" fill="#e3b63c" stroke="#1a1a1a" stroke-width="2" /><path d="M10 15l8 3M30 13l-8 4 9 4M24 30l7 3" fill="none" stroke="#1a1a1a" stroke-width="2.200" /><path d="M8 38c-4-8-2-13 3-17l9-7 2 2-5 6 8-5 1 2-6 6 7-4 1 2-6 6 4-2c0 4-6 9-11 12z" fill="#aaa" stroke="#222" stroke-width="1.300" /></svg>
        <svg class="e7" width="8" height="30" viewBox="0 0 8 30" fill="#202124"><circle cx="4" cy="4" r="3.400" /><circle cx="4" cy="15" r="3.400" /><circle cx="4" cy="26" r="3.400" /></svg>
      </div>

      <div class="page">
        <main class="content">
          <div class="controls">
            <span class="lbl bs"><span v-fit="132">Board Size</span></span>
            <div class="zoom"><svg width="24" height="24" viewBox="0 0 24 24" fill="none" stroke="#444"><circle cx="10" cy="10" r="7.500" stroke-width="3" /><path d="M15.500 15.500l6 6" stroke-width="3.800" /><path d="M6 10h8" stroke-width="2" /></svg></div>
            <div class="zoom"><svg width="24" height="24" viewBox="0 0 24 24" fill="none" stroke="#444"><circle cx="10" cy="10" r="7.500" stroke-width="3" /><path d="M15.500 15.500l6 6" stroke-width="3.800" /><path d="M6 10h8M10 6v8" stroke-width="2" /></svg></div>
            <span class="lbl fl"><span v-fit="46">Flip</span></span>
            <i class="check"></i>
          </div>

          <svg class="board" width="1536" height="880" viewBox="800 400 1536 880" font-family="'Liberation Mono', monospace" font-size="25">
            <rect x="838" y="475.500" width="1460" height="799" rx="9" fill="#fff" stroke="#ddd" stroke-width="2" />
            <rect v-for="(s, i) in shapes" :key="i" :x="s.x + 1" :y="s.y + 1" :width="s.w - 2" height="88" rx="7" fill="#fff" stroke="#ccc" stroke-width="2" />
            <circle v-for="(s, i) in shapes" :key="'c' + i" :cx="s.cx" :cy="s.cy" r="6" fill="#888" />
            <g fill="none" stroke-width="2">
              <polyline v-for="(p, i) in colWires" :key="'n' + i" :points="p" stroke="#2b3950" />
              <polyline v-for="(p, i) in rowWires" :key="'r' + i" :points="p" stroke="#b23c2c" />
            </g>
            <g fill="#2c3e50" text-anchor="middle"><text v-for="c in colLabels" :key="c.n" :x="c.x" y="437">{{ c.n }}</text></g>
            <g fill="#b8402f" text-anchor="middle"><text v-for="r in rowLabels" :key="r.n" x="793" :y="r.y">{{ r.n }}</text></g>
          </svg>

          <div class="panel">
            <nav class="ptabs">
              <b v-for="(t, i) in panelTabs" :key="t.text" :class="{ on: i === 0 }" :style="{ width: t.width + 'px', marginLeft: t.gap + 'px' }"><span v-fit="t.width">{{ t.text }}</span></b>
            </nav>
            <p class="p1"><span v-fit="687">Change the number of rows and columns in the matrix.</span></p>
            <div v-for="c in counters" :key="c.label" class="counter">
              <span class="clabel"><span v-fit="c.width">{{ c.label }}</span></span>
              <div class="btn"><svg width="18" height="18" viewBox="0 0 18 18"><rect y="6" width="18" height="6" rx="1.500" fill="#fff" /></svg></div>
              <div class="num">{{ c.value }}</div>
              <div class="btn"><svg width="18" height="18" viewBox="0 0 18 18"><rect y="6.500" width="18" height="5" rx="1.500" fill="#fff" /><rect x="6.500" width="5" height="18" rx="1.500" fill="#fff" /></svg></div>
            </div>
            <p class="p2"><span v-fit="346">Specify the diode direction.</span></p>
            <div class="dir">
              <div class="select"><span v-fit="195">Row to Column</span><svg width="9" height="28" viewBox="0 0 9 28" fill="#aaa"><path d="M4.500 0L9 11H0zM0 17h9L4.500 28z" /></svg></div>
              <div class="help">?</div>
            </div>
            <p class="p3"><span v-fit="672">Change the position of the selected key in the matrix.</span></p>
            <p class="p4"><span v-fit="198">No key selected</span></p>
          </div>
        </main>
        <div class="track"><i></i></div>
        <div class="bubble"><svg width="40" height="43" viewBox="0 0 40 43"><path d="M20 0c7 0 14 1.500 20 4 0 19-6 31-20 39z" fill="#7bbb76" /><path d="M20 0C13 0 6 1.500 0 4c0 19 6 31 20 39z" fill="#74b17e" /><path d="M12 18l8 9 11-15" fill="none" stroke="#fff" stroke-width="3" /></svg></div>
      </div>
    </section>
  </div>
</template>

<style>
html, body { margin: 0; overflow: hidden; }
</style>

<style scoped>
* { box-sizing: border-box; }
i, em { font-style: normal; display: block; }
svg { display: block; flex: none; }
.desktop { position: relative; width: 3456px; height: 2234px; overflow: hidden; background: linear-gradient(#50aacd, #4ca5c8 50%, #4da6c9); font-family: Inter, "Noto Sans", sans-serif; }

/* menu bar */
.menubar { height: 74px; background: #3390b3; display: flex; align-items: center; color: #fff; font-size: 25px; font-weight: 500; white-space: nowrap; }
.menubar svg, .mi { filter: drop-shadow(0 3px 4px rgba(0, 40, 60, .3)); }
.apple { margin-left: 41px; margin-top: -5px; }
.mi { display: block; flex: none; line-height: 74px; }
.app { margin-left: 40px; width: 102px; font-weight: 700; }
.status { display: flex; align-items: center; margin-left: auto; width: 1428px; flex: none; }
.kbd { font: 600 25px Inter, sans-serif; fill: #fff; stroke: none; }
.pct { margin-left: 39px; width: 49px; font-size: 22px; word-spacing: 3px; }
.batt { margin-left: 10px; }
.cc { margin-left: 38px; }
.date { margin-left: 36px; width: 129px; opacity: .48; }
.time { margin-left: 17px; opacity: .48; }

/* document */
.doc { position: absolute; left: 892px; top: 2130px; width: 1210px; height: 104px; background: #f4f4f4; display: flex; padding-top: 60px; border-left: 1px solid #999; }
.doc > div { flex: none; }
.doc-side { width: 540px; padding-left: 63px; font-size: 27px; line-height: 36px; font-weight: 500; color: #555; white-space: nowrap; border-right: 2px solid #d0d0d0; }
.doc-gutter { width: 29px; border-right: 2px solid #d0d0d0; }
.doc-margin { width: 144px; background: #fff; border-right: 2px solid #d8d8d8; }
.doc-col { width: 356px; height: 42px; border-bottom: 2px solid #d0d0d0; border-right: 2px solid #d8d8d8; padding: 0 0 0 32px; }
.doc-col i { height: 18px; background: #d4d4dc; border-radius: 0 0 8px 8px; width: 200px; }
.doc-col.last { border-right: 0; width: 140px; overflow: hidden; }

/* spreadsheet */
.excel { position: absolute; left: 2096px; top: 99px; width: 1380px; height: 2155px; background: #efefef; box-shadow: 0 0 2px rgba(0, 0, 0, .6), 0 20px 60px rgba(0, 0, 0, .3); white-space: nowrap; overflow: hidden; display: flex; flex-direction: column; border-radius: 20px 0 0 0; }
.x-title { height: 65px; flex: none; background: #539467; border-top: 2px solid #a5c7ae; display: flex; align-items: center; padding-left: 861px; gap: 9px; color: #fff; font-size: 26px; }
.x-tabs { height: 57px; padding-top: 11px; flex: none; display: flex; font-size: 25px; font-weight: 500; line-height: 37px; color: #6c6c6c; background: linear-gradient(#f6f6f6, #f3f3f3); }
.x-tabs > span { flex: none; }
.t0 { width: 777px; text-align: right; }
.t1 { margin-left: 55px; width: 122px; }
.t2 { margin-left: 51px; width: 101px; }
.t3 { margin-left: 54px; }
.x-ribbon { height: 151px; flex: none; display: flex; padding-top: 11px; background: linear-gradient(#f3f3f3, #eee); font-size: 21.500px; }
.x-ribbon > div { flex: none; }
.x-formats { width: 1120px; height: 124px; padding-left: 723px; border-right: 2px solid #d2d2d2; }
.x-fmt { height: 44.500px; display: flex; align-items: center; color: #a9a9a9; }
.x-ftext { margin: 0 13px 0 11px; }
.x-cells { width: 138px; height: 124px; padding-left: 27px; border-right: 2px solid #d2d2d2; color: #5c5c5c; }
.x-cellrow { display: flex; align-items: center; height: 60px; }
.x-cellrow .cv { margin: 16px 0 0 13px; }
.x-cells > span, .x-edit > span { display: block; line-height: 26px; margin-top: 18px; }
.x-edit { color: #5c5c5c; padding-left: 23px; }
.x-edit svg { margin: 2px 0 -4px 38px; height: 64px; }
.x-edit > span { margin-top: 16px; }
.x-rule { height: 9px; flex: none; border-top: 3px solid #adadad; background: #f6f6f6; border-bottom: 2px solid #999; }
.x-head { height: 27px; flex: none; margin-left: 677px; display: flex; background: #fbfbfb; border-bottom: 2px solid #b4b4b4; font: 13.500px/29px "Open Sans", sans-serif; color: #555; }
.x-head span { border-right: 2px solid #ddd; flex: none; display: flex; justify-content: safe center; overflow: hidden; }
.x-head i { letter-spacing: -.5px; }
.x-head em { flex: 1; background: #f2f2f2; }
.sheet { position: relative; height: 1723px; flex: none; margin-left: 677px; background: #fff; padding-top: 15px; font: 700 13px/20px Lato, sans-serif; color: #000; }
.lines { position: absolute; left: 0; top: 0; }
.nums { position: relative; display: flex; height: 18px; gap: 14px; }
.nums b { width: 80px; text-align: center; line-height: 18px; }
.caps { position: relative; display: flex; gap: 10px; height: 66px; margin: 0 0 18px -3px; }
.caps.first { height: 68px; }
.cap { width: 84px; border: 4px solid #000; text-align: center; flex: none; padding-left: 2px; }
.caps.first .cap { padding-left: 0; }
.cap b { display: block; height: 20px; line-height: 19px; }
.cap b.arrow { font: 700 16px/20px Inter, sans-serif; }
.cap.none { visibility: hidden; }
.cap.green { background: #7fab57; }
.cap.yellow { background: #ffff54; }
.cap.brown { background: #b86029; }
.cap.big b:nth-child(2) { font-size: 24px; }
.x-scroll { height: 32px; flex: none; border-top: 2px solid #e4e4e4; background: linear-gradient(#f6f6f6 6px, #bababa 6px, #bababa 24px, #fcfcfc 24px, #fcfcfc 26px, #ececec 26px, #ececec 28px, #cfcfcf 28px); }
.x-sheets { height: 52px; flex: none; background: #efefef; border-bottom: 2px solid #9c9c9c; padding-left: 120px; display: flex; }
.x-sheets i { width: 160px; height: 43px; background: #fff; border: 2px solid #888; border-radius: 0 0 6px 6px; }
.x-sheets em { width: 2px; height: 40px; background: #aaa; margin-left: 74px; }
.x-status { flex: 1; display: flex; align-items: flex-start; padding: 7px 0 0 49px; background: linear-gradient(#e4e4e4, #d8d8d8); font-size: 22px; line-height: 30px; color: #505050; }
.x-status span { flex: none; }
.s1 { width: 58px; margin: -1px 40px 0 0; }
.s2 { width: 643px; margin: -1px 0 0 15px; }
.g1 { margin-left: 442px; }
.g2 { margin-left: 45px; }

/* browser */
.chrome { position: absolute; left: 366px; top: 90px; width: 2434px; height: 2110px; border-radius: 20px; background: #f8dccb; box-shadow: 0 0 2px rgba(0, 0, 0, .65), 0 36px 84px rgba(0, 0, 0, .5); overflow: visible; }
.strip { height: 80px; display: flex; align-items: center; border-radius: 20px 20px 0 0; box-shadow: inset 0 2px 0 rgba(255, 255, 255, .5); }
.lights { display: flex; gap: 16px; width: 200px; padding: 2px 0 0 42px; flex: none; }
.lights i { width: 24px; height: 24px; border-radius: 50%; }
.r { background: #ec6a5e; border: 1px solid #d55c50; }
.y { background: #f4bf4f; border: 1px solid #dba63c; }
.g { background: #61c554; border: 1px solid #52ad45; }
.tab { width: 92px; display: flex; align-items: center; flex: none; }
.sep { width: 4px; height: 32px; border-radius: 2px; background: #fff; margin-left: 36px; flex: none; }
.skb { width: 32px; display: flex; font: 700 19px "Liberation Serif", serif; color: #5f83c4; justify-content: center; letter-spacing: -.8px; }
.skb i { color: #777; }
.active { margin: 12px 0 0 -39px; }
.pjrc { margin-left: 4px; font: italic 700 19px "Liberation Serif", serif; fill: #fff; }
.sep.s2 { margin-left: 34px; }
.plus { margin-left: 22px; }
.drop { width: 56px; height: 56px; margin-left: auto; margin-right: 12px; background: #fff; border-radius: 20px; display: flex; align-items: center; justify-content: center; }
.bar { height: 94px; background: #fff; border-bottom: 2px solid #cdcdcd; border-radius: 16px 16px 0 0; display: flex; align-items: center; }
.n1 { margin-left: 26px; }
.n2 { margin-left: 36px; }
.n3 { margin-left: 36px; }
.n4 { margin-left: 35px; }
.omni { width: 1558px; height: 68px; border-radius: 34px; background: #e0e0e0; margin-left: 34px; display: flex; align-items: center; flex: none; }
.site { width: 48px; height: 48px; border-radius: 50%; background: #fff; margin-left: 10px; display: flex; align-items: center; justify-content: center; }
.url { margin-left: 16px; font-size: 28px; color: #202124; width: 230px; }
.tr { margin-left: auto; }
.st { margin: 0 29px 0 28px; }
.e1 { margin-left: 36px; }
.e2 { margin-left: 40px; }
.e3 { margin-left: 44px; }
.e4 { margin-left: 44px; }
.esep { width: 3px; height: 32px; background: #f8dccb; margin-left: 35px; }
.e5 { margin-left: 37px; }
.e6 { margin-left: 36px; }
.e7 { margin-left: 47px; }

.page { position: relative; height: 1936px; background: #fafafa; display: flex; border-radius: 0 0 20px 20px; overflow: hidden; }
.content { width: 2404px; display: flex; flex-direction: column; align-items: center; }
.track { width: 30px; border-left: 2px solid #e8e8e8; background: #fcfcfc; padding: 126px 0 0 7px; }
.track i { width: 16px; height: 1395px; border-radius: 8px; background: #c1c1c1; }
.controls { width: 100%; height: 65px; margin-top: 44px; padding-left: 984px; display: flex; align-items: center; flex: none; font: 500 28px/36px "Noto Sans", sans-serif; color: #666; white-space: nowrap; -webkit-text-stroke: .5px #666; }
.lbl { margin-top: -8px; flex: none; }
.bs { width: 132px; margin-right: 14px; }
.zoom { width: 63px; height: 65px; border: 2px solid #ddd; border-radius: 6px; background: #fff; margin-left: 8px; display: flex; align-items: center; justify-content: center; }
.fl { margin-left: 47px; width: 46px; margin-right: 15px; }
.check { width: 29px; height: 30px; border: 2px solid #ddd; border-radius: 6px; background: #fff; margin-top: -3px; }
.board { margin-top: 27px; overflow: visible; }
.panel { width: 1536px; height: 831px; margin-top: 28px; background: #fff; border: 2px solid #ddd; border-radius: 8px; flex: none; white-space: nowrap; }
.ptabs { display: flex; padding: 32px 0 0 48px; font: 700 28px/34px Lato, sans-serif; color: #b9b9b9; }
.ptabs b { flex: none; }
.ptabs .on { color: #2c3e50; }
.panel p { margin: 0; text-align: center; font: 500 27px/34px "Noto Sans", sans-serif; color: #666; -webkit-text-stroke: .5px #666; }
.panel .p1 { margin-top: 66px; margin-bottom: 25px; }
.counter { height: 64px; margin-bottom: 16px; display: flex; align-items: center; }
.clabel { width: 704px; text-align: right; padding-top: 7px; font: 500 30px/40px "Noto Sans", sans-serif; color: #666; -webkit-text-stroke: .3px #666; }
.btn { width: 64px; height: 64px; border-radius: 6px; background: #37475c; border: 2px solid #2f4054; margin-left: 16px; display: flex; align-items: center; justify-content: center; padding-bottom: 4px; }
.num { width: 96px; height: 64px; border: 2px solid #ddd; border-radius: 6px; margin-left: 6px; text-align: center; font: 28px/60px Lato, sans-serif; color: #000; }
.num + .btn { margin-left: 6px; }
.panel .p2 { margin-top: 51px; }
.dir { display: flex; height: 64px; margin-top: 25px; padding-left: 604px; align-items: center; }
.select { width: 271px; height: 64px; border: 2px solid #ddd; border-radius: 6px; padding: 0 20px 0 15px; display: flex; align-items: center; justify-content: space-between; font: 28px Lato, sans-serif; color: #444; }
.help { width: 28px; height: 28px; margin: -7px 0 0 26px; border-radius: 50%; background: #888; color: #fff; font: 900 24px/28px Lato, sans-serif; text-align: center; }
.panel .p3 { margin-top: 50px; }
.panel .p4 { margin-top: 76px; font-weight: 400; color: #888; -webkit-text-stroke: 0; }
.bubble { position: absolute; right: 50px; bottom: 20px; width: 80px; height: 80px; border-radius: 50%; background: #fff; box-shadow: 0 0 24px rgba(0, 0, 0, .2); display: flex; align-items: center; justify-content: center; }
</style>
